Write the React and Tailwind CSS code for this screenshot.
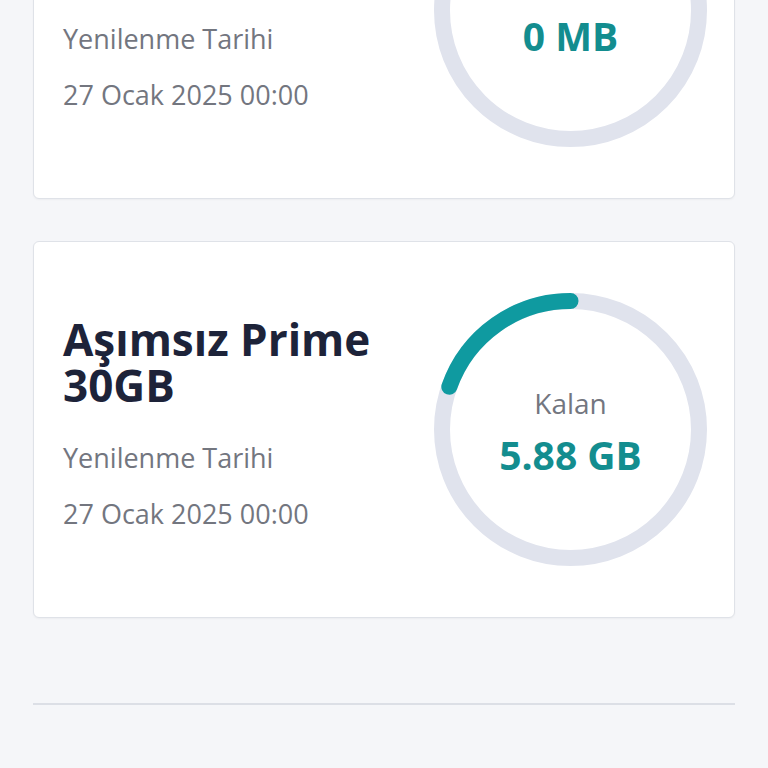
// App.jsx — data package usage cards

const packages = [
    {
        id: 1,
        title: 'Sınırsız Sosyal Medya 10GB',
        renewLabel: 'Yenilenme Tarihi',
        renewDate: '27 Ocak 2025 00:00',
        remaining: '0 MB',
        ratio: 0,
    },
    {
        id: 2,
        title: 'Aşımsız Prime 30GB',
        renewLabel: 'Yenilenme Tarihi',
        renewDate: '27 Ocak 2025 00:00',
        remaining: '5.88 GB',
        ratio: 5.88 / 30,
    },
];

const SIZE = 273;
const STROKE = 16;
const C = SIZE / 2;
const R = C - STROKE / 2;

// arc from 12 o'clock going counter-clockwise
function arcPath(ratio) {
    const a = ratio * 2 * Math.PI;
    const x = C - R * Math.sin(a);
    const y = C - R * Math.cos(a);
    const large = ratio > 0.5 ? 1 : 0;
    return `M ${C} ${C - R} A ${R} ${R} 0 ${large} 0 ${x.toFixed(2)} ${y.toFixed(2)}`;
}

function UsageRing({ ratio, remaining }) {
    return (
        <div className="relative w-[273px] h-[273px] shrink-0">
            <svg width={SIZE} height={SIZE} viewBox={`0 0 ${SIZE} ${SIZE}`}>
                <circle cx={C} cy={C} r={R} fill="none" stroke="#e0e3ed" strokeWidth={STROKE} />
                {ratio > 0 && (
                    <path d={arcPath(ratio)} fill="none" stroke="#0f9aa0"
                        strokeWidth={STROKE} strokeLinecap="round" />
                )}
            </svg>
            <div className="absolute inset-0 flex flex-col items-center justify-center">
                <p className="text-[28px] leading-[36px] text-[#73767f]">Kalan</p>
                <p className="mt-[14px] text-[39px] leading-[40px] font-bold text-[#138d8f]">
                    {remaining}
                </p>
            </div>
        </div>
    );
}

function PackageCard({ pkg }) {
    return (
        <div className="bg-white border border-[#dfe2e8] rounded-[6px]
                        shadow-[0_1px_2px_rgba(0,0,0,0.04)] pl-[29px] pr-[27px] py-[51px]
                        flex items-center justify-between">
            <div className="flex-1 mb-[11px]">
                <h2 className="text-[44px] leading-[46px] font-bold text-[#1d2339] max-w-[340px]">
                    {pkg.title}
                </h2>
                <p className="mt-[32px] text-[27px] leading-[36px] text-[#73767f]">
                    {pkg.renewLabel}
                </p>
                <p className="mt-[20px] text-[27px] leading-[36px] text-[#73767f]">
                    {pkg.renewDate}
                </p>
            </div>
            <UsageRing ratio={pkg.ratio} remaining={pkg.remaining} />
        </div>
    );
}

export default function App() {
    return (
        <div className="h-[768px] overflow-hidden bg-[#f5f6f9]"
            style={{ fontFamily: '"Open Sans", "Noto Sans", sans-serif' }}>
            <div className="mx-[33px] mt-[-178px] flex flex-col gap-[42px]">
                {packages.map((p) => (
                    <PackageCard key={p.id} pkg={p} />
                ))}
            </div>
            <div className="mx-[33px] mt-[85px] border-t-2 border-[#dcdfe6]" />
        </div>
    );
}
